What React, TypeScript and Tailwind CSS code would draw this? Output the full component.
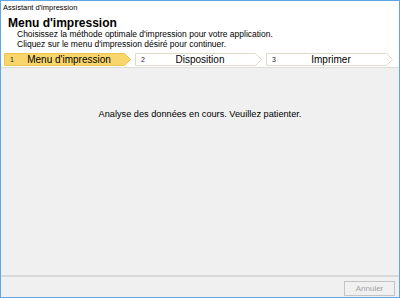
const steps = [
  { n: "1", label: "Menu d'impression", active: true },
  { n: "2", label: "Disposition", active: false },
  { n: "3", label: "Imprimer", active: false },
];

function Step({ n, label, active }: { n: string; label: string; active: boolean }) {
  return (
    <div className="relative h-[13px] w-[127px]">
      <svg className="absolute inset-0" width="127" height="13" viewBox="0 0 127 13">
        <polygon
          points="0.5,0.5 120.5,0.5 126.5,6.5 120.5,12.5 0.5,12.5"
          fill={active ? "#f9d66c" : "#ffffff"}
          stroke={active ? "#ebc451" : "#dfdccd"}
        />
      </svg>
      <span className="absolute left-[6px] top-0 text-[7px] leading-[13px] text-[#222]">{n}</span>
      <div className="relative flex h-full items-center justify-center pl-[3px] text-[10px] leading-[13px] text-black">
        {label}
      </div>
    </div>
  );
}

export default function App() {
  return (
    <div className="flex h-[298px] w-[400px] flex-col border border-[#5fa6e4] bg-[#f0f0f0] font-['Liberation_Sans',Arial,sans-serif] text-black">
      <div className="border-b border-[#dcdcdc] bg-white pb-[1px]">
        <div className="h-[16px] pl-[2px] pt-[1px] text-[7.5px] leading-[12px]">Assistant d'impression</div>
        <div className="h-[13px] pl-[7px] text-[12px] font-bold leading-[13px]">Menu d'impression</div>
        <div className="pl-[16px] text-[8.5px] leading-[9.5px]">
          <p>Choisissez la méthode optimale d'impression pour votre application.</p>
          <p>Cliquez sur le menu d'impression désiré pour continuer.</p>
        </div>
        <div className="mt-[4px] flex gap-[4px] pl-[3px]">
          {steps.map((s) => (
            <Step key={s.n} {...s} />
          ))}
        </div>
      </div>
      <div className="flex-1 pt-[40px] text-center text-[9.2px] leading-[12px]">
        Analyse des données en cours. Veuillez patienter.
      </div>
      <div className="h-[22px] border-t-2 border-[#dadada] pr-[4px] pt-[4px]">
        <div className="ml-auto flex h-[15px] w-[51px] items-center justify-center border border-[#c4c4c4] bg-[#f0f0f0] text-[8px] text-[#a3a3a3]">
          Annuler
        </div>
      </div>
    </div>
  );
}
